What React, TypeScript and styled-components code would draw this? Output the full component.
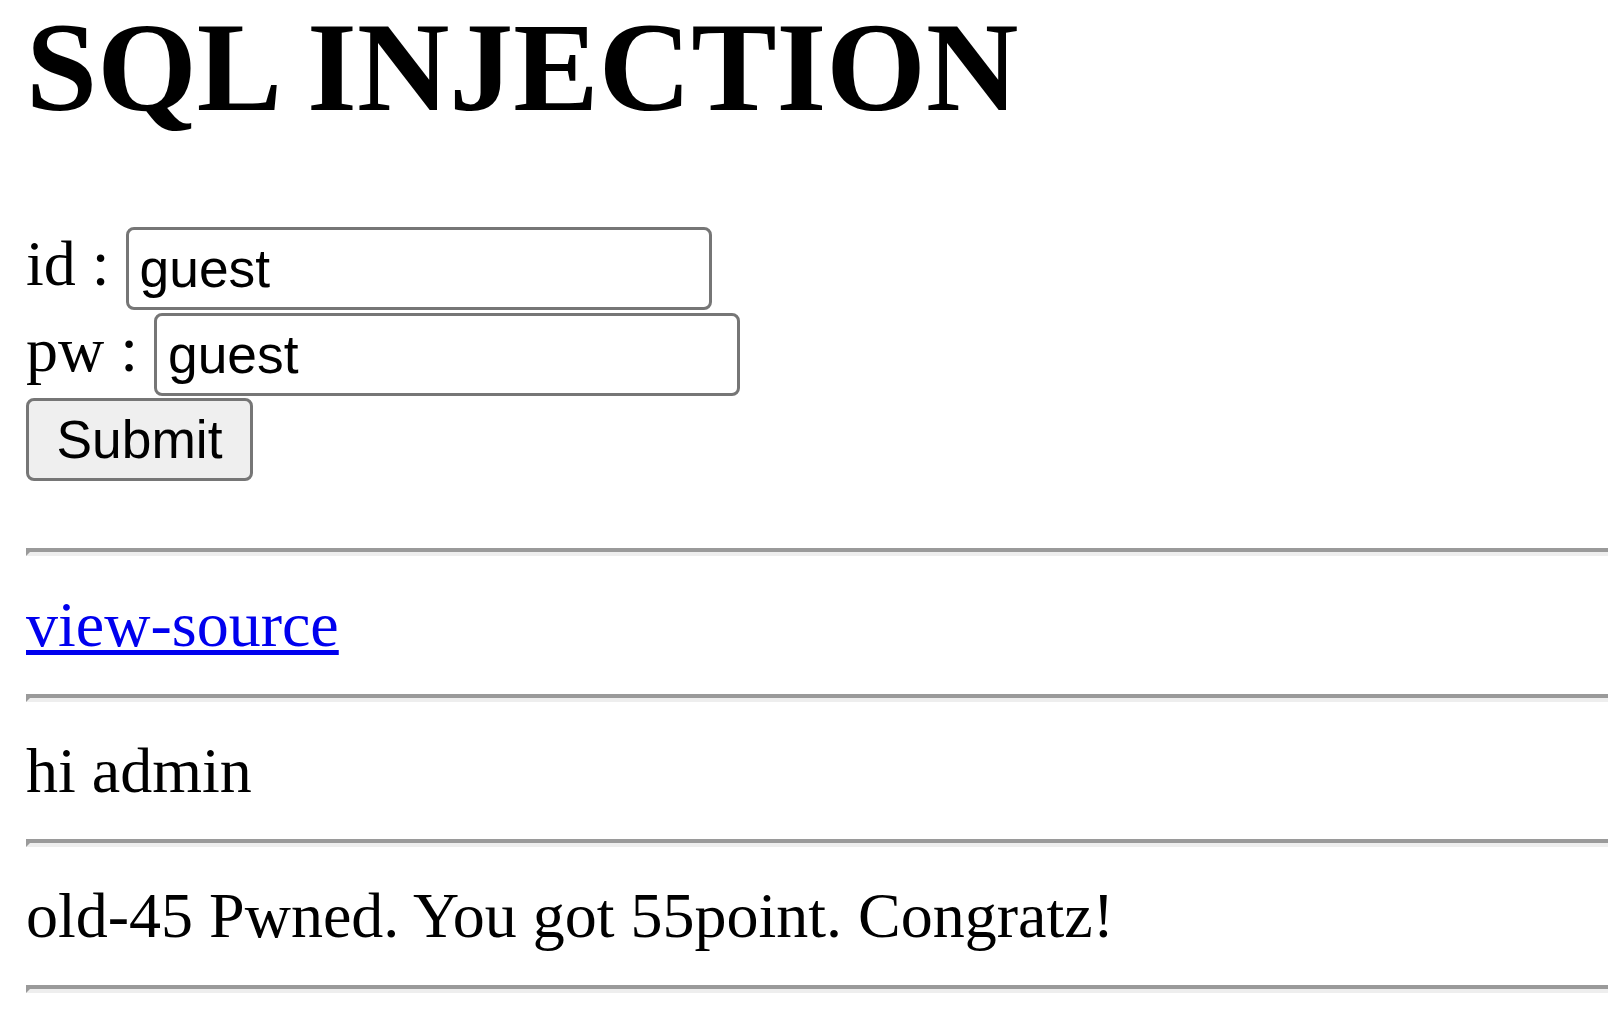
import React from 'react';
import styled, { createGlobalStyle } from 'styled-components';

const GlobalStyle = createGlobalStyle`
  html, body {
    margin: 0;
    padding: 0;
    background: #fff;
  }
  body {
    font-family: "Liberation Serif", "Times New Roman", serif;
    color: #000;
  }
`;

const Page = styled.div`
  padding: 0 0 0 26px;
  font-size: 64px;
  line-height: 73.5px;
`;

const Title = styled.h1`
  margin: 0;
  font-size: 128px;
  font-weight: bold;
  line-height: 134px;
  white-space: nowrap;
`;

const LoginForm = styled.form`
  display: flex;
  flex-direction: column;
  align-items: flex-start;
  gap: 2.5px;
  margin: 93px 0 67px;
`;

const Field = styled.div`
  display: flex;
  align-items: flex-start;
  gap: 16px;
  height: 83px;
`;

const Label = styled.label`
  font-size: 64px;
  line-height: 73.5px;
  white-space: nowrap;
`;

const TextInput = styled.input`
  box-sizing: border-box;
  width: 586px;
  height: 83px;
  margin: 0;
  padding: 0 11px;
  border: 3px solid #767676;
  border-radius: 8px;
  background: #fff;
  color: #000;
  font-family: "Liberation Sans", Arial, sans-serif;
  font-size: 53.33px;
  outline: none;
`;

const SubmitButton = styled.button`
  box-sizing: border-box;
  width: 227px;
  height: 83px;
  margin: 0;
  padding: 0;
  border: 3px solid #767676;
  border-radius: 8px;
  background: #efefef;
  color: #000;
  font-family: "Liberation Sans", Arial, sans-serif;
  font-size: 53.33px;
  cursor: pointer;
`;

const Rule = styled.hr`
  height: 0;
  margin: 32px 0;
  border: 0;
  border-top: 4px solid #9a9a9a;
  border-left: 4px solid #9a9a9a;
  border-bottom: 4px solid #eeeeee;
`;

const Line = styled.div`
  white-space: nowrap;
`;

const SourceLink = styled.a`
  color: #0000ee;
  text-decoration: underline;
  text-decoration-thickness: 5px;
  text-underline-offset: 4px;
`;

export default function App() {
  return (
    <>
      <GlobalStyle />
      <Page>
        <Title>SQL INJECTION</Title>
        <LoginForm method="get" onSubmit={e => e.preventDefault()}>
          <Field>
            <Label htmlFor="id">id :</Label>
            <TextInput id="id" name="id" defaultValue="guest" />
          </Field>
          <Field>
            <Label htmlFor="pw">pw :</Label>
            <TextInput id="pw" name="pw" defaultValue="guest" />
          </Field>
          <SubmitButton type="submit">Submit</SubmitButton>
        </LoginForm>
        <Rule />
        <Line>
          <SourceLink href="#view_source">view-source</SourceLink>
        </Line>
        <Rule />
        <Line>hi admin</Line>
        <Rule />
        <Line>old-45 Pwned. You got 55point. Congratz!</Line>
        <Rule />
      </Page>
    </>
  );
}
